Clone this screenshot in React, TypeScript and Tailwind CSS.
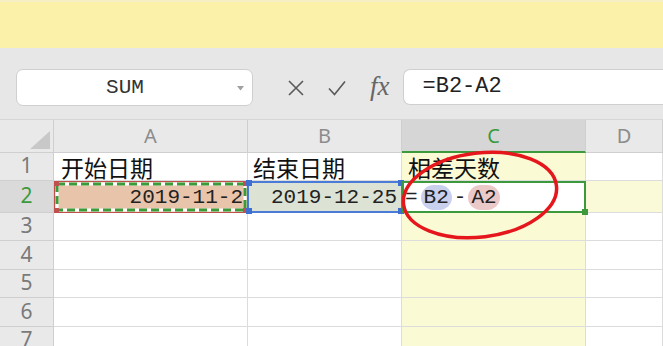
import React from "react";

const grid = "border-r border-b border-[#dcdcdc]";
const mono = "font-['Liberation_Mono',monospace]";
const cjk = "font-['Noto_Sans_CJK_SC',sans-serif]";

function ColHead({ label, active }: { label: string; active?: boolean }) {
  return (
    <div
      className={
        active
          ? "flex items-center justify-center border-r border-b-2 border-r-[#cfcfcf] border-b-[#3c9a3c] bg-[#d6d6d6] text-[20px] text-[#3c9a3c]"
          : "flex items-center justify-center border-r border-b border-[#cfcfcf] bg-[#e9e9e9] text-[20px] text-[#8c8c8c]"
      }
    >
      {label}
    </div>
  );
}

function RowHead({ n, active }: { n: number; active?: boolean }) {
  return (
    <div
      className={
        "flex items-center justify-center border-r border-b border-[#cfcfcf] pb-[2px] text-[21px] leading-none " +
        (active ? "bg-[#dadada] text-[#3c9a3c]" : "bg-[#e9e9e9] text-[#7a7a7a]")
      }
    >
      {n}
    </div>
  );
}

function Ants() {
  return (
    <svg className="absolute inset-0 h-full w-full" viewBox="0 0 194 32" preserveAspectRatio="none">
      <rect x="0.5" y="0.5" width="193" height="31" fill="none" stroke="#c0504d" strokeWidth="1" />
      <rect x="3" y="3" width="188" height="26" fill="none" stroke="#ffffff" strokeWidth="3" />
      <rect x="3" y="3" width="188" height="26" fill="none" stroke="#3b9b3b" strokeWidth="3" strokeDasharray="8 4" />
      <rect x="0" y="0" width="5" height="5" fill="#c0504d" />
      <rect x="189" y="0" width="5" height="5" fill="#c0504d" />
      <rect x="0" y="27" width="5" height="5" fill="#c0504d" />
      <rect x="189" y="27" width="5" height="5" fill="#c0504d" />
    </svg>
  );
}

function BlueBox() {
  return (
    <div className="absolute inset-0 border-y-2 border-x border-[#4a7bd6]">
      <span className="absolute -left-[3px] -top-[3px] h-[6px] w-[6px] bg-[#3d6fd0]" />
      <span className="absolute -right-[3px] -top-[3px] h-[6px] w-[6px] bg-[#3d6fd0]" />
      <span className="absolute -bottom-[3px] -left-[3px] h-[6px] w-[6px] bg-[#3d6fd0]" />
      <span className="absolute -bottom-[3px] -right-[3px] h-[6px] w-[6px] bg-[#3d6fd0]" />
    </div>
  );
}

export default function App() {
  const empty = [3, 4, 5, 6, 7];
  return (
    <div className="relative h-[346px] w-[663px] overflow-hidden bg-white font-['Noto_Sans',sans-serif]">
      <div className="h-[48px] border-t-2 border-[#f6efc6] bg-[#fcf1a9]" />

      <div className="flex h-[71px] items-start bg-[#e7e7e7] pl-4 pt-[21px]">
        <div className="relative flex h-[37px] w-[237px] items-center justify-center rounded-[7px] border border-[#cfcfcf] bg-white pr-[19px]">
          <span className={`${mono} text-[21px] leading-none text-[#333]`}>SUM</span>
          <svg className="absolute right-[8px] top-[16px]" width="7" height="5" viewBox="0 0 7 5">
            <path d="M0 0 L7 0 L3.5 4.5 Z" fill="#a0a0a0" />
          </svg>
        </div>
        <svg className="ml-[35px] mt-[11px]" width="16" height="16" viewBox="0 0 16 16">
          <path d="M1 1 L15 15 M15 1 L1 15" stroke="#595959" strokeWidth="1.6" fill="none" />
        </svg>
        <svg className="ml-[24px] mt-[11px]" width="18" height="16" viewBox="0 0 18 16">
          <path d="M1 8.5 L6.5 14.5 L17 1.5" stroke="#595959" strokeWidth="1.6" fill="none" />
        </svg>
        <span className="ml-[24px] mt-[4px] font-['Liberation_Serif',serif] text-[27px] italic leading-none text-[#666]">
          fx
        </span>
        <div className="ml-[13px] flex h-[36px] flex-1 items-center rounded-l-[7px] border border-r-0 border-[#cfcfcf] bg-white pl-[19px]">
          <span className={`${mono} text-[22px] leading-none text-[#222]`}>=B2-A2</span>
        </div>
      </div>

      <div className="grid grid-cols-[54px_194px_154px_184px_1fr] grid-rows-[33px_28px_32px_28px_29px_28px_29px_28px] border-t border-[#d6d6d6]">
        <div className="relative border-r border-b border-[#cfcfcf] bg-[#e9e9e9]">
          <svg className="absolute left-[30px] top-[11px]" width="20" height="18" viewBox="0 0 20 18">
            <path d="M20 0 L20 18 L0 18 Z" fill="#c8c8c8" />
          </svg>
        </div>
        <ColHead label="A" />
        <ColHead label="B" />
        <ColHead label="C" active />
        <ColHead label="D" />

        <RowHead n={1} />
        <div className={`${grid} ${cjk} flex items-end pl-[7px] text-[23px] leading-[25px] text-[#111]`}>开始日期</div>
        <div className={`${grid} ${cjk} flex items-end pl-[5px] text-[23px] leading-[25px] text-[#111]`}>结束日期</div>
        <div className={`${grid} ${cjk} flex items-end bg-[#fafad4] pl-[6px] text-[23px] leading-[25px] text-[#111]`}>相差天数</div>
        <div className={grid} />

        <RowHead n={2} active />
        <div className={`relative flex items-center justify-end bg-[#e8c4ab] pr-[5px] ${mono} text-[21px] leading-none text-[#222]`}>
          <Ants />
          <span className="relative">2019-11-2</span>
        </div>
        <div className={`relative flex items-center justify-end bg-[#dce3d5] pr-[5px] ${mono} text-[21px] leading-none text-[#222]`}>
          2019-12-25
          <BlueBox />
        </div>
        <div className={`relative flex items-center bg-white pl-[3px] ${mono} text-[21px] leading-none text-[#222]`}>
          <span>=</span>
          <span className="ml-[3px] rounded-full bg-[#c9d0ee] px-[3px] py-[2px]">B2</span>
          <span className="mx-[2px]">-</span>
          <span className="rounded-full bg-[#ecc9c9] px-[3px] py-[2px]">A2</span>
          <div className="absolute inset-0 border-2 border-[#3c9a3c]">
            <span className="absolute -bottom-[4px] -right-[4px] h-[6px] w-[6px] bg-[#3c9a3c]" />
          </div>
        </div>
        <div className={`${grid} bg-[#fafad8]`} />

        {empty.map((n) => (
          <React.Fragment key={n}>
            <RowHead n={n} />
            <div className={grid} />
            <div className={grid} />
            <div className={`${grid} bg-[#fafad4]`} />
            <div className={grid} />
          </React.Fragment>
        ))}
      </div>

      <svg className="pointer-events-none absolute left-0 top-0" width="663" height="346" viewBox="0 0 663 346">
        <ellipse cx="480" cy="195" rx="77" ry="42" transform="rotate(-7 480 195)" fill="none" stroke="#e5161c" strokeWidth="3.5" />
      </svg>
    </div>
  );
}
